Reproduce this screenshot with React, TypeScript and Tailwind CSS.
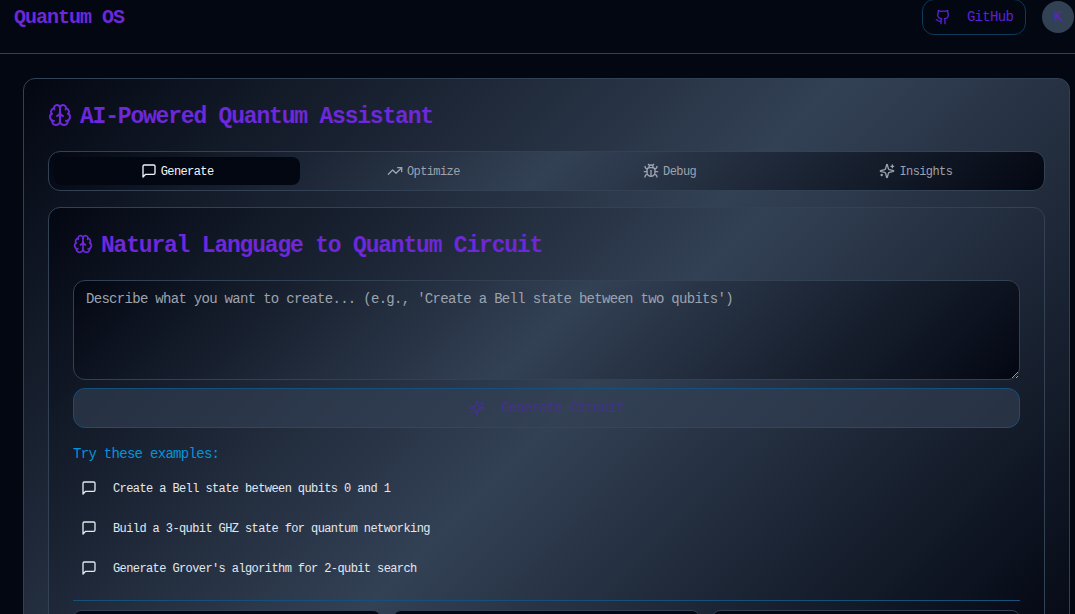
import { Brain, Bug, Github, TrendingUp } from "lucide-react"

const mono = "font-['Liberation_Mono',monospace]"
const glow = "bg-[linear-gradient(135deg,#030712,#334155,#030712)]"

type IconProps = { size?: number; className?: string }

const MessageIcon = ({ size = 16, className = "" }: IconProps) => (
  <svg
    width={size}
    height={size}
    viewBox="0 0 24 24"
    fill="none"
    stroke="currentColor"
    strokeWidth="2"
    strokeLinecap="round"
    strokeLinejoin="round"
    className={className}
  >
    <path d="M21 15a2 2 0 0 1-2 2H7l-4 4V5a2 2 0 0 1 2-2h14a2 2 0 0 1 2 2z" />
  </svg>
)

const SparkIcon = ({ size = 16, className = "" }: IconProps) => (
  <svg
    width={size}
    height={size}
    viewBox="0 0 24 24"
    fill="none"
    stroke="currentColor"
    strokeWidth="2"
    strokeLinecap="round"
    strokeLinejoin="round"
    className={className}
  >
    <path d="M9.937 15.5A2 2 0 0 0 8.5 14.063l-6.135-1.582a.5.5 0 0 1 0-.962L8.5 9.936A2 2 0 0 0 9.937 8.5l1.582-6.135a.5.5 0 0 1 .963 0L14.063 8.5A2 2 0 0 0 15.5 9.937l6.135 1.581a.5.5 0 0 1 0 .964L15.5 14.063a2 2 0 0 0-1.437 1.437l-1.582 6.135a.5.5 0 0 1-.963 0z" />
    <path d="M20 3v4" />
    <path d="M22 5h-4" />
    <path d="M4 17v2" />
    <path d="M5 18H3" />
  </svg>
)

const tabs = [
  { label: "Generate", icon: MessageIcon, active: true },
  { label: "Optimize", icon: TrendingUp, active: false },
  { label: "Debug", icon: Bug, active: false },
  { label: "Insights", icon: SparkIcon, active: false },
]

const examples = [
  "Create a Bell state between qubits 0 and 1",
  "Build a 3-qubit GHZ state for quantum networking",
  "Generate Grover's algorithm for 2-qubit search",
]

const App = () => {
  return (
    <div className={`h-screen overflow-hidden bg-[#030712] ${mono}`}>
      <header className="flex h-[54px] items-center justify-between border-b border-[#334155] pb-[19px] pl-[14px] pr-px">
        <h1 className="pt-0.5 text-[20px] font-bold tracking-[-1px] text-[#6d28d9]">Quantum OS</h1>
        <div className="flex items-center gap-4">
          <button className="flex h-9 w-[104px] items-center justify-center gap-4 rounded-xl border border-[#0c3a57] text-[14px] tracking-[-0.7px] text-[#5b21d6]">
            <Github size={16} />
            GitHub
          </button>
          <div className="flex size-8 items-center justify-center rounded-full bg-[#334155] text-[14px] text-[#5b21d6]">K</div>
        </div>
      </header>

      <main className="ml-[23px] mr-[5px] mt-6">
        <section className={`h-[600px] rounded-xl border border-[#334155] p-6 ${glow}`}>
          <h2 className="flex h-6 items-center gap-2 text-[23px] font-bold tracking-[-1.2px] text-[#6d28d9]">
            <Brain size={24} />
            <span className="pt-1">AI-Powered Quantum Assistant</span>
          </h2>

          <div className={`mt-6 grid h-10 grid-cols-4 rounded-xl border border-[#334155] p-[5px] ${glow}`}>
            {tabs.map((tab) => (
              <div
                key={tab.label}
                className={`flex items-center justify-center gap-1 rounded-lg text-[12px] tracking-[-0.6px] ${
                  tab.active ? "bg-[#030712] text-[#f1f5f9]" : "text-[#9ca3af]"
                }`}
              >
                <tab.icon size={16} />
                <span className="pt-0.5">{tab.label}</span>
              </div>
            ))}
          </div>

          <div className={`mt-4 h-[443px] overflow-hidden rounded-xl border border-[#334155] p-6 ${glow}`}>
            <h3 className="flex h-6 items-center gap-2 text-[23px] font-bold tracking-[-1.2px] text-[#6d28d9]">
              <Brain size={20} />
              <span className="pt-1">Natural Language to Quantum Circuit</span>
            </h3>

            <textarea
              className={`mt-6 block h-[100px] w-full resize-y rounded-xl border border-[#334155] px-3 py-2 text-[14px] leading-5 tracking-[-0.7px] outline-none placeholder:text-[#9ca3af] ${glow}`}
              placeholder="Describe what you want to create... (e.g., 'Create a Bell state between two qubits')"
            />

            <button className="mt-2 flex h-10 w-full items-center justify-center gap-4 rounded-xl border border-[#15507a] bg-[#334155]/60 text-[14px] tracking-[-0.7px] text-[#43308f]">
              <SparkIcon size={16} />
              Generate Circuit
            </button>

            <p className="mt-4 text-[14px] leading-5 tracking-[-0.7px] text-[#0494dd]">Try these examples:</p>

            <div className="mt-1">
              {examples.map((text) => (
                <div key={text} className="flex h-10 items-center gap-4 pl-2 text-[12px] tracking-[-0.6px] text-[#e2e8f0]">
                  <MessageIcon size={16} className="shrink-0" />
                  <span className="pt-0.5">{text}</span>
                </div>
              ))}
            </div>

            <div className="mt-3 grid grid-cols-3 gap-3 border-t border-[#15507a] pt-[9px]">
              <div className="h-10 rounded-lg border border-[#334155] bg-[#030712]" />
              <div className="h-10 rounded-lg border border-[#334155] bg-[#030712]" />
              <div className="h-10 rounded-lg border border-[#334155] bg-[#030712]" />
            </div>
          </div>
        </section>
      </main>
    </div>
  )
}

export default App
